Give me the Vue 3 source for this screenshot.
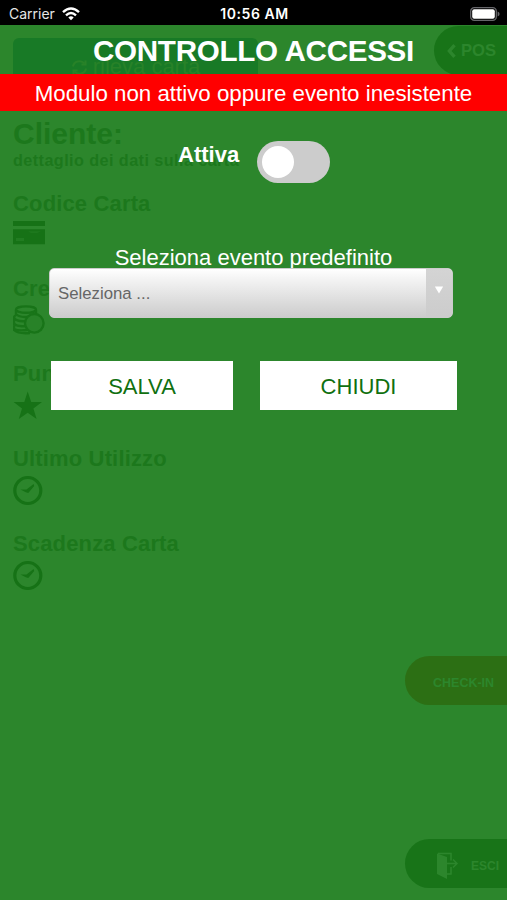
<script setup>
import { ref } from 'vue'

const active = ref(false)
const fields = [
  { label: 'Codice Carta', icon: 'card' },
  { label: 'Credito', icon: 'coins' },
  { label: 'Punti', icon: 'star' },
  { label: 'Ultimo Utilizzo', icon: 'clock' },
  { label: 'Scadenza Carta', icon: 'clock' },
]
</script>

<template>
  <div class="screen">
    <header class="status">
      <div class="carrier">
        <span>Carrier</span>
        <svg width="18" height="14" viewBox="0 0 18 14" fill="none" stroke="#fff" stroke-width="2.4">
          <path d="M1 5.2 Q9 -2.2 17 5.2" />
          <path d="M4 8.4 Q9 3.8 14 8.4" />
          <path d="M6.3 10.4 Q9 8.1 11.7 10.4 L9 13.3Z" fill="#fff" stroke="none" />
        </svg>
      </div>
      <span class="time">10:56 AM</span>
      <svg class="battery" width="30" height="14" viewBox="0 0 30 14">
        <rect x=".7" y=".7" width="25.6" height="12.6" rx="3.6" fill="none" stroke="#66666a" stroke-width="1.3" />
        <rect x="2.2" y="2.2" width="22.6" height="9.6" rx="2" fill="#fff" />
        <path d="M27.6 4.6 Q29.6 5.4 29.6 7 Q29.6 8.6 27.6 9.4Z" fill="#66666a" />
      </svg>
    </header>

    <main class="page">
      <div class="read">
        <svg width="17" height="17" viewBox="0 0 17 17" fill="none" stroke="#288228" stroke-width="2">
          <path d="M2 7.5 A6.5 6 0 0 1 13.5 4.5 M15 9.5 A6.5 6 0 0 1 3.5 12.5" />
          <path d="M14.5 1.5v4h-4 M2.5 15.5v-4h4" />
        </svg>
        <span>rileva carta</span>
      </div>
      <h2>Cliente:</h2>
      <p class="sub">dettaglio dei dati sulla carta</p>
      <section v-for="f in fields" :key="f.label" class="field">
        <h3>{{ f.label }}</h3>
        <svg v-if="f.icon === 'card'" width="32" height="32" viewBox="0 0 32 32">
          <path d="M0 4h32v5H0z M0 12.2h32v15H0z" fill="#167216" />
          <path d="M3 21h8v3H3z M15 14.5h13l-4 1.2h-6z" fill="#217c21" />
        </svg>
        <svg v-else-if="f.icon === 'coins'" class="low" width="32" height="32" viewBox="0 0 32 32" fill="none" stroke="#187418" stroke-width="2.4">
          <ellipse cx="13" cy="4.6" rx="10" ry="3.2" />
          <path d="M3 5v4q4 4 13 2.6 M23 5v4 M3 10q-2 1-2 3 3 4 12 3 M1 14v5q4 3 11 2 M3 19q-2 1-2 3v3q4 4 16 3 M1 24q4 2 13 1" />
          <circle cx="21.3" cy="18.3" r="9.3" fill="#288228" />
        </svg>
        <svg v-else-if="f.icon === 'star'" class="low" width="32" height="32" viewBox="0 0 32 32">
          <path d="M14.7 1.5 18.2 12H29l-8.6 6.5L23.6 29l-8.9-6.3L5.8 29 9 18.5.6 12h10.7z" fill="#167216" />
        </svg>
        <svg v-else class="low" width="32" height="32" viewBox="0 0 32 32">
          <circle cx="14.8" cy="15.5" r="13" fill="none" stroke="#167216" stroke-width="3.2" />
          <path d="M7.5 14.5 13.5 14.6 20.6 9 21.2 11 15.3 18 12.8 17.2z" fill="#167216" />
        </svg>
      </section>

      <div class="pill pos">
        <svg width="9" height="14" viewBox="0 0 9 14" fill="none" stroke="#2c862c" stroke-width="3.4"><path d="M7.5 1.2 2.4 7l5.1 5.8" /></svg>
        <span>POS</span>
      </div>
      <div class="pill check"><span>CHECK-IN</span></div>
      <div class="pill exit">
        <svg width="23" height="28" viewBox="0 0 23 28">
          <path d="M1 1.5 11 5v22L1 22z" fill="#2c862c" />
          <path d="M2 1.5h13v7 M15 15v7h-4 M11 11.5h10 M17 7.5l4 4-4 4" fill="none" stroke="#2c862c" stroke-width="1.5" />
        </svg>
        <span>ESCI</span>
      </div>
    </main>

    <div class="modal">
      <h1>CONTROLLO ACCESSI</h1>
      <div class="alert">Modulo non attivo oppure evento inesistente</div>
      <div class="toggle-row">
        <span>Attiva</span>
        <button class="switch" :class="{ on: active }" aria-label="Attiva" @click="active = !active"><i></i></button>
      </div>
      <div class="caption">Seleziona evento predefinito</div>
      <div class="select">
        <span>Seleziona ...</span>
        <div class="arrow"><svg width="10" height="8" viewBox="0 0 10 8"><path d="M.8.5h8.4L5 7.6z" fill="#fff" /></svg></div>
      </div>
      <div class="actions">
        <button class="save">SALVA</button>
        <button class="close">CHIUDI</button>
      </div>
    </div>
  </div>
</template>

<style>
body { margin: 0; background: #2c862c; }
</style>

<style scoped>
* { box-sizing: border-box; }
.screen { position: relative; width: 507px; height: 900px; overflow: hidden; background: #2c862c; font-family: "Liberation Sans", Arial, sans-serif; }
h1, h2, h3, p { margin: 0; }
svg { display: block; flex: none; }
button { border: 0; padding: 0; font-family: inherit; }

.status { height: 25px; background: #000; color: #fff; display: grid; grid-template-columns: 1fr auto 1fr; align-items: center; padding: 2px 7px 0 9px; font: 14px/20px Inter, sans-serif; }
.carrier { display: flex; align-items: center; gap: 7px; color: #e6e6e6; }
.time { font-weight: 600; letter-spacing: .55px; }
.battery { justify-self: end; }

.page { position: relative; height: 875px; padding: 13px 13px 0; color: #1c781c; }
.read { width: 245px; height: 56px; border-radius: 6px; background: #187a26; color: #288228; display: flex; align-items: center; justify-content: center; gap: 5px; padding-top: 2px; font-size: 22px; }
h2 { margin-top: 23px; font-size: 30px; line-height: 34px; }
.sub { font-size: 16.2px; line-height: 18px; font-weight: 700; letter-spacing: .43px; }
.field { height: 85px; }
.field:first-of-type { margin-top: 22px; }
.field h3 { font-size: 22px; line-height: 26px; letter-spacing: .15px; }
.low { margin-top: 3px; }
.pill { position: absolute; right: 0; height: 49px; border-radius: 25px 0 0 25px; background: #187418; color: #2c862c; display: flex; align-items: center; font-weight: 700; }
.pos { top: 1px; width: 73px; padding: 1px 0 0 13px; gap: 5px; font-size: 16.6px; }
.check { top: 631px; width: 102px; padding: 5px 0 0 28px; background: #2c6f14; font-size: 12.5px; }
.exit { top: 814px; width: 102px; padding: 5px 0 0 31px; gap: 12px; font-size: 12px; }

.modal { position: absolute; top: 25px; left: 0; width: 507px; color: #fff; display: flex; flex-direction: column; }
h1 { height: 49px; font-size: 29.6px; line-height: 52px; letter-spacing: -.3px; text-align: center; }
.alert { height: 37px; background: #f00; font-size: 22.3px; line-height: 40px; text-align: center; }
.toggle-row { display: flex; gap: 18px; padding: 30px 0 0 178px; font-size: 22px; font-weight: 700; line-height: 28px; }
.switch { width: 73px; height: 42px; border-radius: 21px; background: #ccc; padding: 5px; display: flex; }
.switch i { width: 32px; height: 32px; border-radius: 50%; background: #fff; }
.switch.on { justify-content: flex-end; }
.caption { margin-top: 60px; height: 25px; font-size: 22px; line-height: 29px; text-align: center; }
.select { position: relative; margin-left: 49px; width: 404px; height: 50px; border-radius: 5px; border: 1px solid #ccc; overflow: hidden; background: linear-gradient(#fff 0%, #f4f4f4 20%, #ccc 100%); color: #666; display: flex; justify-content: space-between; font-size: 16.8px; line-height: 49px; padding-left: 8px; }
.arrow { width: 26px; background: linear-gradient(#d4d4d4, #ccc); display: flex; justify-content: center; padding-top: 17px; }
.actions { display: flex; gap: 27px; padding: 43px 0 0 51px; }
.actions button { height: 49px; background: #fff; color: #107010; font-size: 22px; line-height: 51px; }
.save { width: 182px; }
.close { width: 197px; }
</style>
